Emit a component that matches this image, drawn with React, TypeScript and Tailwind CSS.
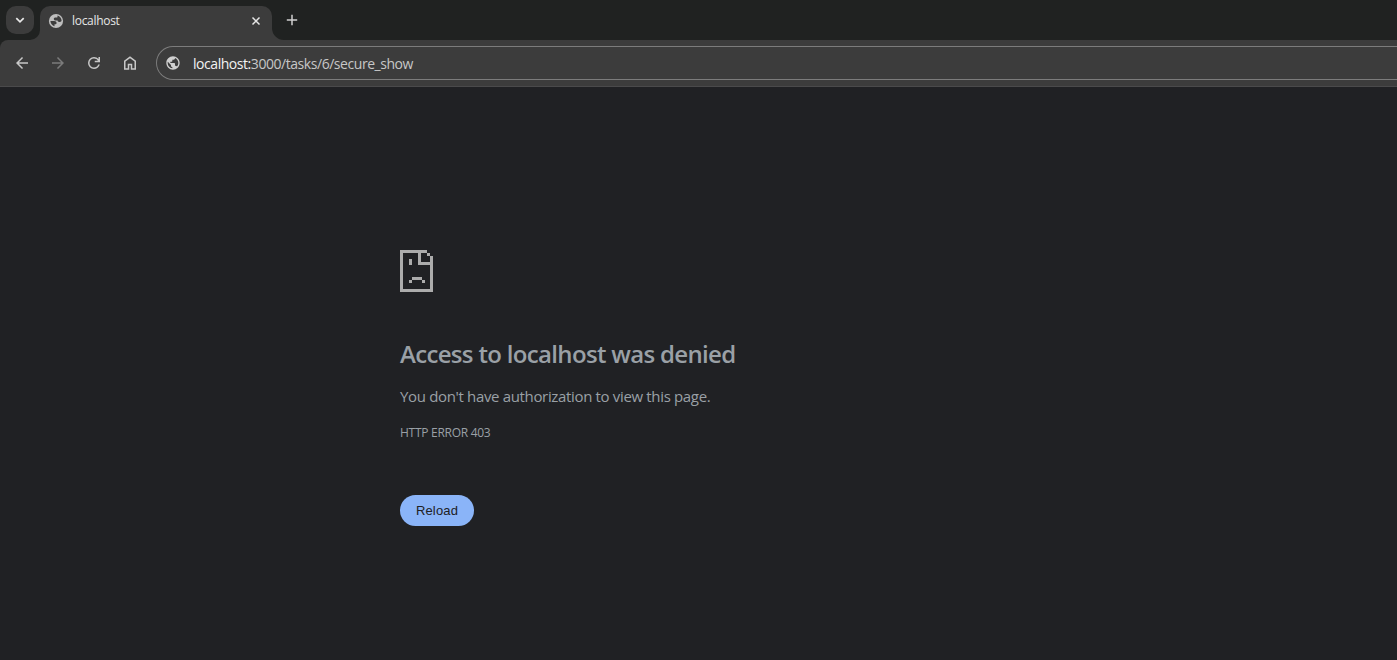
import type { ReactNode } from "react";

const PUBLIC_GLOBE =
  "M12 2C6.48 2 2 6.48 2 12s4.48 10 10 10 10-4.48 10-10S17.52 2 12 2zm-1 17.93c-3.95-.49-7-3.85-7-7.93 0-.62.08-1.21.21-1.79L9 15v1c0 1.1.9 2 2 2v1.93zm6.9-2.54c-.26-.81-1-1.39-1.9-1.39h-1v-3c0-.55-.45-1-1-1H8v-2h2c.55 0 1-.45 1-1V7h2c1.1 0 2-.9 2-2v-.41c2.93 1.19 5 4.06 5 7.41 0 2.08-.8 3.97-2.1 5.39z";

function TabGlobe() {
  return (
    <svg className="size-4 shrink-0" viewBox="0 0 16 16">
      <circle cx="8" cy="8" r="7.1" fill="#bdbdbd" />
      <path
        fill="#3c3c3c"
        d="M2.400 8h3.800c1.500 0 2.400.8 2.400 1.900 0 .9-.6 1.400-1.500 1.400H6.500v1.900C4.200 12.600 2.500 10.600 2.400 8zM13.600 8c-.7.9-1.500 1.100-2.500 1-1 0-1.500-.6-1.500-1.400H7.700c-1.200 0-1.900-.6-1.900-1.500 0-1 .7-1.500 1.700-1.500h1.200c.6 0 .8-.5.8-1.100v-.9c2.400.5 4.100 2.700 4.100 5.400z"
      />
    </svg>
  );
}

function NavButton({ label, dim = false, children }: { label: string; dim?: boolean; children: ReactNode }) {
  return (
    <button
      aria-label={label}
      className={`flex size-9 items-center justify-center ${dim ? "text-[#7b7b7b]" : "text-[#c7c7c7]"}`}
    >
      {children}
    </button>
  );
}

function TabStrip() {
  return (
    <div className="flex h-10 items-start bg-[#202221] pl-1.5">
      <button
        aria-label="Search tabs"
        className="mt-1.5 flex size-7 items-center justify-center rounded-[10px] bg-[#3c3c3c]"
      >
        <svg className="size-4" viewBox="0 0 16 16" fill="none" stroke="#e8e8e8" strokeWidth="1.7">
          <path d="M4.300 6.200 8 9.900l3.700-3.700" />
        </svg>
      </button>
      <div className="relative mt-1.5 ml-1.5 flex h-[34px] w-[232px] items-center rounded-t-[10px] bg-[#3c3c3c] pr-2 pb-[5px] pl-2">
        <svg className="absolute bottom-0 -left-[10px] size-[10px]" viewBox="0 0 10 10" fill="#3c3c3c">
          <path d="M10 0v10H0A10 10 0 0 0 10 0z" />
        </svg>
        <svg className="absolute -right-[12px] bottom-0 size-[12px]" viewBox="0 0 12 12" fill="#3c3c3c">
          <path d="M0 0v12h12A12 12 0 0 1 0 0z" />
        </svg>
        <TabGlobe />
        <span className="ml-2 flex-1 pt-px text-[12px] leading-4 tracking-[-0.3px] text-[#e6e6e6]">localhost</span>
        <svg className="size-4" viewBox="0 0 16 16" fill="none" stroke="#e6e6e6" strokeWidth="1.500">
          <path d="m4.500 4.500 7 7m0-7-7 7" />
        </svg>
      </div>
      <button aria-label="New tab" className="mt-1.5 ml-1.5 flex size-7 items-center justify-center">
        <svg className="size-4" viewBox="0 0 16 16" fill="none" stroke="#d0d0d0" strokeWidth="1.500">
          <path d="M8 2.800v10.400M2.800 8h10.400" />
        </svg>
      </button>
    </div>
  );
}

function Toolbar() {
  return (
    <div className="bg-[#202221]">
      <div className="flex h-[47px] items-center overflow-hidden rounded-tl-lg border-b border-[#4a4a4b] bg-[#3c3c3c] pl-1">
        <NavButton label="Back">
          <svg className="size-[18px]" viewBox="0 0 24 24" fill="currentColor">
            <path d="M20 11H7.830l5.590-5.590L12 4l-8 8 8 8 1.410-1.410L7.830 13H20v-2z" />
          </svg>
        </NavButton>
        <NavButton label="Forward" dim>
          <svg className="size-[18px]" viewBox="0 0 24 24" fill="currentColor">
            <path d="m12 4-1.410 1.410L16.170 11H4v2h12.170l-5.580 5.590L12 20l8-8z" />
          </svg>
        </NavButton>
        <NavButton label="Reload page">
          <svg className="size-[18px]" viewBox="0 -960 960 960" fill="currentColor">
            <path d="M480-160q-134 0-227-93t-93-227q0-134 93-227t227-93q69 0 132 28.500T720-690v-110h80v280H520v-80h168q-32-56-87.500-88T480-720q-100 0-170 70t-70 170q0 100 70 170t170 70q77 0 139-44t87-116h84q-28 106-114 173t-196 67Z" />
          </svg>
        </NavButton>
        <NavButton label="Home">
          <svg className="size-[18px]" viewBox="0 -960 960 960" fill="currentColor">
            <path d="M240-200h120v-240h240v240h120v-360L480-740 240-560v360Zm-80 80v-480l320-240 320 240v480H520v-240h-80v240H160Z" />
          </svg>
        </NavButton>
        <div className="ml-2 flex h-[34px] flex-1 items-center rounded-l-full border border-r-0 border-[#7c7c7c] pl-2">
          <svg className="size-4" viewBox="0 0 24 24" fill="#d0d0d0">
            <path d={PUBLIC_GLOBE} />
          </svg>
          <span className="ml-3 pt-px text-[14px] leading-5 tracking-[-0.45px] text-[#c7c7c7]">
            <span className="text-[#f2f2f2]">localhost:</span>3000/tasks/6/secure_show
          </span>
        </div>
      </div>
    </div>
  );
}

function SadPage() {
  return (
    <svg className="h-[42px] w-[33px]" viewBox="0 0 33 42" fill="#acacac" shapeRendering="crispEdges">
      <path
        fillRule="evenodd"
        d="M0 0h27v3h-6v9h9V6h3v36H0zM3 3v36h27V15H18V3zM27 3h3v3h-3zM9 9h3v6H9zM12 27h10v3H12zM9 30h3v3H9zM22 30h3v3h-3z"
      />
    </svg>
  );
}

export default function App() {
  return (
    <div className="flex h-screen flex-col overflow-hidden bg-[#202124] font-['Open_Sans','Noto_Sans',sans-serif]">
      <TabStrip />
      <Toolbar />
      <main className="flex flex-1 flex-col items-start pt-[163px] pl-[400px] text-[#9aa0a6]">
        <SadPage />
        <h1 className="mt-[47px] text-[24px] leading-[29px] font-semibold tracking-[-0.67px]">
          Access to localhost was denied
        </h1>
        <p className="mt-4 text-[15px] leading-6 tracking-[-0.34px]">You don't have authorization to view this page.</p>
        <p className="mt-[13px] text-[12px] leading-6 tracking-[-0.28px]">HTTP ERROR 403</p>
        <button className="mt-[50px] h-[31px] w-[74px] rounded-full bg-[#8ab4f8] font-['Liberation_Sans',sans-serif] text-[13px] tracking-[0.15px] text-[#202124]">
          Reload
        </button>
      </main>
    </div>
  );
}
